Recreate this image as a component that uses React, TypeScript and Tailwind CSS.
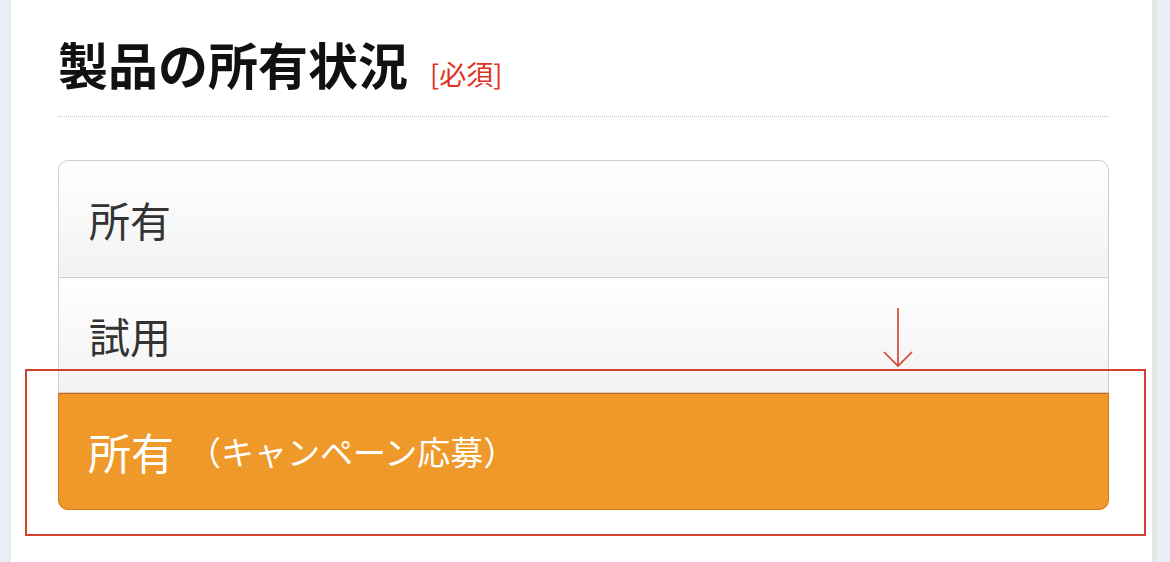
const options = [
  { label: '所有', note: '' },
  { label: '試用', note: '' },
];

export default function App() {
  return (
    <div
      className="flex h-[562px] w-[1170px] overflow-hidden bg-white"
      style={{ fontFamily: '"Noto Sans CJK JP", "Noto Sans", sans-serif' }}
    >
      <div className="w-[8px] shrink-0 bg-[#e8edf6]" />
      <div className="w-[3px] shrink-0 bg-[#e9e9e9]" />

      <main className="relative flex-1 pl-[47px] pr-[43px] pt-[38px]">
        {/* Heading */}
        <div className="flex items-baseline border-b border-dotted border-[#c4c4c4] pb-[28px]">
          <h2 className="text-[50px] font-bold leading-none text-[#111]">製品の所有状況</h2>
          <span className="ml-[22px] text-[27px] leading-none text-[#e0321f]">[必須]</span>
        </div>

        {/* Options */}
        <div className="mt-[43px] flex flex-col">
          {options.map((opt, i) => (
            <div
              key={opt.label}
              className={
                i === 0
                  ? 'flex h-[118px] items-center rounded-t-[10px] border border-[#cfcfcf] bg-gradient-to-b from-white to-[#f2f2f2] pl-[30px]'
                  : 'flex h-[115px] items-center border-x border-b border-[#cfcfcf] bg-gradient-to-b from-white to-[#f2f2f2] pl-[30px]'
              }
            >
              <span className="text-[41px] leading-none text-[#333]">{opt.label}</span>
            </div>
          ))}
          <div className="flex h-[117px] items-center rounded-b-[10px] border border-[#d9771d] border-t-[#c9640f] bg-[#ef992b] pl-[29px]">
            <span className="text-[43px] leading-none text-white">所有</span>
            <span className="ml-[14px] text-[33px] leading-none text-white">（キャンペーン応募）</span>
          </div>
        </div>

        {/* Annotation: highlight box */}
        <div className="pointer-events-none absolute left-[14px] top-[369px] h-[167px] w-[1121px] border-2 border-[#d3402f]" />

        {/* Annotation: arrow */}
        <svg
          className="pointer-events-none absolute left-[872px] top-[306px]"
          width="30"
          height="64"
          viewBox="0 0 30 64"
          fill="none"
          stroke="#d3402f"
          strokeWidth="1.6"
        >
          <line x1="15" y1="2" x2="15" y2="60" />
          <polyline points="1,46 15,60 29,46" />
        </svg>
      </main>

      <div className="w-[5px] shrink-0 bg-[#e6e6e6]" />
      <div className="w-[13px] shrink-0 bg-[#e8edf6]" />
    </div>
  );
}
